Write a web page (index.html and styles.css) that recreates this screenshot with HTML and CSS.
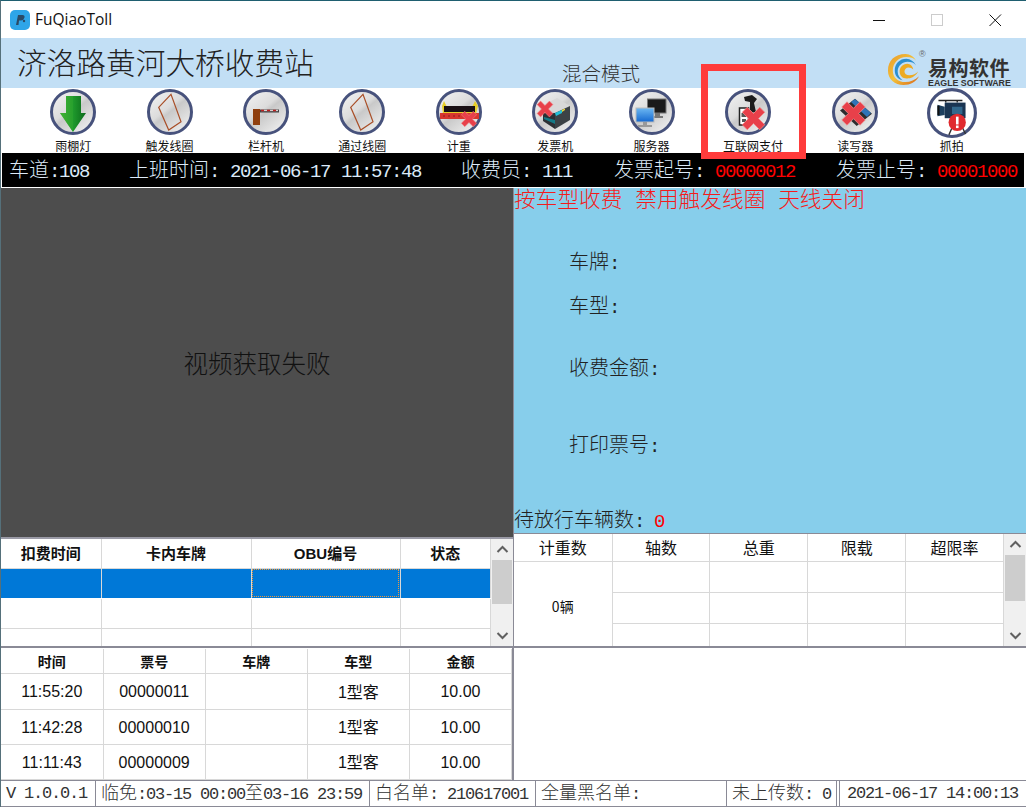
FILE: index.html
```html
<!DOCTYPE html>
<html lang="zh-CN">
<head>
<meta charset="utf-8">
<title>FuQiaoToll</title>
<link rel="stylesheet" href="styles.css">
</head>
<body>
<svg class="defs" width="0" height="0" aria-hidden="true">
  <defs>
    <linearGradient id="disc" x1="0.1" y1="0" x2="0.9" y2="1">
      <stop offset="0" stop-color="#f2f2f2"/>
      <stop offset="0.42" stop-color="#dcdcdc"/>
      <stop offset="0.5" stop-color="#c9c9c9"/>
      <stop offset="1" stop-color="#f4f4f4"/>
    </linearGradient>
    <linearGradient id="green" x1="0" y1="0" x2="1" y2="0">
      <stop offset="0" stop-color="#5cc23a"/>
      <stop offset="0.5" stop-color="#1f9a2c"/>
      <stop offset="1" stop-color="#0c6a1c"/>
    </linearGradient>
    <linearGradient id="screen" x1="0" y1="0" x2="0" y2="1">
      <stop offset="0" stop-color="#6db8f2"/>
      <stop offset="1" stop-color="#1468d0"/>
    </linearGradient>
    <linearGradient id="swirl" x1="0" y1="0" x2="1" y2="1">
      <stop offset="0" stop-color="#e89a2a"/>
      <stop offset="0.5" stop-color="#f3c13a"/>
      <stop offset="1" stop-color="#d8661a"/>
    </linearGradient>
    <g id="cross">
      <path d="M-9-5-5-9 0-4 5-9 9-5 4 0 9 5 5 9 0 4-5 9-9 5-4 0Z" fill="#e8404a" stroke="#f08a8a" stroke-width=".6"/>
    </g>
    <g id="base">
      <circle cx="24" cy="24" r="21.5" fill="url(#disc)" stroke="#47527c" stroke-width="3"/>
    </g>
  </defs>
</svg>

<div class="window">
  <header class="titlebar">
    <div class="app-title">
      <svg class="app-icon" viewBox="0 0 20 20"><rect width="20" height="20" rx="5" fill="#2ea5e8"/><path d="M6 15 8 5h4.500q2.500 0 2 2.600T11 10.500H9L8.500 15Z" fill="#2a4a66"/><circle cx="14" cy="11" r="1.200" fill="#2a4a66"/></svg>
      <span>FuQiaoToll</span>
    </div>
    <div class="win-controls">
      <svg class="win-btn" viewBox="0 0 46 24"><path d="M17 12.500H29" stroke="#111" fill="none"/></svg>
      <svg class="win-btn" viewBox="0 0 46 24"><rect x="17.500" y="6.500" width="11" height="11" stroke="#ccc" fill="none"/></svg>
      <svg class="win-btn" viewBox="0 0 46 24"><path d="M17.500 6.500 29 18M29 6.500 17.500 18" stroke="#111" fill="none"/></svg>
    </div>
  </header>

  <section class="banner">
    <h1 class="station">济洛路黄河大桥收费站</h1>
    <div class="mode">混合模式</div>
    <div class="logo">
      <svg class="logo-mark" viewBox="0 0 34 34">
        <path d="M19 1C8 1 1 8 1 18c0 9 7 15 16 15 7 0 13-3 16-9-4 4-9 6-14 6C11 30 6 25 6 18 6 10 12 4 20 4c4 0 8 1 10 4C28 4 24 1 19 1Z" fill="url(#swirl)"/>
        <path d="M20 6C13 6 8 11 8 18c0 5 3 9 8 10-3-2-5-5-5-9 0-6 5-10 10-10 4 0 7 1 9 4-2-4-6-7-10-7Z" fill="#2b8fd0"/>
        <path d="M21 11c-5 0-8 4-8 8 0 5 4 8 9 7 4 0 8-3 10-7-2 2-5 4-9 4-3 0-5-2-5-4s2-4 4-4c2 0 4 1 5 2 0-3-3-6-6-6Z" fill="#ecaa22"/>
      </svg>
      <span class="logo-reg">®</span>
      <div class="logo-text">
        <div class="logo-cn">易构软件</div>
        <div class="logo-en">EAGLE SOFTWARE</div>
      </div>
    </div>
  </section>

  <nav class="toolbar">
    <div class="tool">
      <svg class="tool-icon" viewBox="0 0 48 48"><use href="#base"/><path d="M17 8H32V25H37L24 44 11 25H17Z" fill="url(#green)"/><path d="M17 8H24V44L11 25H17Z" fill="#2ea52f" opacity=".6"/></svg>
      <span class="tool-label">雨棚灯</span>
    </div>
    <div class="tool">
      <svg class="tool-icon" viewBox="0 0 48 48"><use href="#base"/><path d="M12.700 19.300 25 6.300 35 33.700 22.700 42Z" fill="none" stroke="#a94f28" stroke-width="1.200"/></svg>
      <span class="tool-label">触发线圈</span>
    </div>
    <div class="tool">
      <svg class="tool-icon" viewBox="0 0 48 48"><use href="#base"/><rect x="11" y="21" width="7" height="16" fill="#8f3f0f"/><rect x="18" y="21.500" width="19" height="3" fill="#444"/><path d="M19 22.500H36" stroke="#d8d0d0" stroke-width="1.300"/><path d="M19 22.500H36" stroke="#c02020" stroke-width="1.300" stroke-dasharray="3 3"/></svg>
      <span class="tool-label">栏杆机</span>
    </div>
    <div class="tool">
      <svg class="tool-icon" viewBox="0 0 48 48"><use href="#base"/><path d="M12.700 19.300 25 6.300 35 33.700 22.700 42Z" fill="none" stroke="#a94f28" stroke-width="1.200"/></svg>
      <span class="tool-label">通过线圈</span>
    </div>
    <div class="tool">
      <svg class="tool-icon" viewBox="0 0 48 48"><use href="#base"/><path d="M7 18 9 13 12 19H37L40 13 43 18 41 26H8Z" fill="#e8cf28"/><rect x="9" y="18" width="31" height="6" fill="#1a1014"/><rect x="5" y="25" width="39" height="6" fill="#d8362e"/><path d="M8 28H26" stroke="#8c1c1c" stroke-dasharray="2 3"/><g transform="translate(34 31) scale(.85)"><use href="#cross"/></g></svg>
      <span class="tool-label">计重</span>
    </div>
    <div class="tool">
      <svg class="tool-icon" viewBox="0 0 48 48"><use href="#base"/><path d="M12 25 24 25V41L12 33Z" fill="#2c3034"/><path d="M14 16 26 10 39 18 24 25Z" fill="#d8d8d8"/><path d="M24 25 39 18V32L24 41Z" fill="#3c4246"/><path d="M13 29 24 32V36L13 31Z" fill="#157a86"/><path d="M24 25 31 22V25L25 28Z" fill="#22c0d8"/><path d="M31 22 34 20.500V22L31 24Z" fill="#e8d83a"/><g transform="translate(14 21) scale(.88)"><use href="#cross"/></g></svg>
      <span class="tool-label">发票机</span>
    </div>
    <div class="tool">
      <svg class="tool-icon" viewBox="0 0 48 48"><use href="#base"/><rect x="19.500" y="11" width="18.500" height="14" fill="#1a1a1a" stroke="#777"/><path d="M27 25H32V28H35V30H24V28H27Z" fill="#777"/><rect x="8" y="20" width="18" height="14" fill="url(#screen)" stroke="#bbb"/><path d="M15 34H19V37H24V39H10V37H15Z" fill="#999"/></svg>
      <span class="tool-label">服务器</span>
    </div>
    <div class="tool tool-pay">
      <svg class="tool-icon" viewBox="0 0 48 48"><use href="#base"/><path d="M20 9 28 7 33 11 30 15 32 24 26 25 26 14 21 13Z" fill="#1c1c1c"/><rect x="15.500" y="20" width="9" height="17" fill="#fff" stroke="#222" stroke-width="1.500"/><path d="M17.500 25h5v4h-5zM18 31h4v3h-4z" fill="#555"/><g transform="translate(29.500 30.500) scale(1.250)"><use href="#cross"/></g></svg>
      <span class="tool-label">互联网支付</span>
    </div>
    <div class="tool">
      <svg class="tool-icon" viewBox="0 0 48 48"><use href="#base"/><path d="M9 22.500 24 10.700 41 25.700 25.700 38Z" fill="#2c2c2e"/><path d="M20 14 24 11 40 25 36 29Z" fill="#2e74b8"/><g transform="translate(22.500 25.500) scale(1.300)"><use href="#cross"/></g></svg>
      <span class="tool-label">读写器</span>
    </div>
    <div class="tool">
      <svg class="tool-icon tool-icon-cam" viewBox="0 0 48 48"><circle cx="24" cy="24" r="22.500" fill="#fff" stroke="#47527c" stroke-width="3"/><path d="M11 12H34M18 12V14M29 12V14" stroke="#222" stroke-width="1.300" fill="none"/><path d="M10 16 17 18V26L10 27Z" fill="#1c3f5e"/><rect x="10" y="17" width="2" height="9" fill="#111"/><rect x="17" y="14" width="20" height="15" fill="#1a3552"/><rect x="24" y="18" width="10" height="7" fill="#32688c"/><path d="M25 36 21 45M33 36 37 44" stroke="#333" stroke-width="1.300"/><circle cx="29" cy="33" r="8.300" fill="#e02a2e"/><rect x="27.800" y="27.500" width="2.500" height="7.500" fill="#fff"/><rect x="27.800" y="36" width="2.500" height="2.500" fill="#fff"/></svg>
      <span class="tool-label">抓拍</span>
    </div>
  </nav>

  <section class="infobar">
    <div class="info info-lane"><span class="cn">车道</span>:108</div>
    <div class="info info-shift"><span class="cn">上班时间</span>: 2021-06-17 11:57:48</div>
    <div class="info info-op"><span class="cn">收费员</span>: 111</div>
    <div class="info info-from"><span class="cn">发票起号</span>: <span class="alert">00000012</span></div>
    <div class="info"><span class="cn">发票止号</span>: <span class="alert">00001000</span></div>
  </section>

  <main class="workspace">
    <div class="col col-left">
      <div class="video">视频获取失败</div>

      <div class="grid-box grid-box-deduct">
        <table class="grid grid-deduct">
          <colgroup><col class="c-d1"><col class="c-d2"><col class="c-d3"><col></colgroup>
          <thead><tr><th>扣费时间</th><th>卡内车牌</th><th class="latin-bold">OBU编号</th><th>状态</th></tr></thead>
          <tbody>
            <tr class="selected"><td></td><td></td><td class="focus"></td><td></td></tr>
            <tr><td></td><td></td><td></td><td></td></tr>
            <tr><td></td><td></td><td></td><td></td></tr>
          </tbody>
        </table>
        <div class="scrollbar">
          <svg class="sb-arrow" viewBox="0 0 21 21"><path d="M5.500 13 10.500 8 15.500 13" fill="none" stroke="#606060" stroke-width="2"/></svg>
          <div class="sb-track"><div class="sb-thumb sb-thumb-deduct"></div></div>
          <svg class="sb-arrow" viewBox="0 0 21 21"><path d="M5.500 8 10.500 13 15.500 8" fill="none" stroke="#606060" stroke-width="2"/></svg>
        </div>
      </div>

      <div class="grid-box grid-box-tickets">
        <table class="grid grid-tickets">
          <thead><tr><th>时间</th><th>票号</th><th>车牌</th><th>车型</th><th>金额</th></tr></thead>
          <tbody>
            <tr class="r1"><td>11:55:20</td><td>00000011</td><td></td><td class="kind">1型客</td><td>10.00</td></tr>
            <tr><td>11:42:28</td><td>00000010</td><td></td><td class="kind">1型客</td><td>10.00</td></tr>
            <tr><td>11:11:43</td><td>00000009</td><td></td><td class="kind">1型客</td><td>10.00</td></tr>
          </tbody>
        </table>
      </div>
    </div>

    <div class="col col-right">
      <div class="panel">
        <div class="notice">按车型收费 禁用触发线圈 天线关闭</div>
        <div class="field field-plate"><span class="cn">车牌</span>:</div>
        <div class="field field-type"><span class="cn">车型</span>:</div>
        <div class="field field-fee"><span class="cn">收费金额</span>:</div>
        <div class="field field-ticket"><span class="cn">打印票号</span>:</div>
        <div class="pending"><span class="cn">待放行车辆数</span>: <span class="alert">0</span></div>
      </div>

      <div class="grid-box grid-box-weigh">
        <table class="grid grid-weigh">
          <colgroup><col class="c-w1"><col><col><col><col></colgroup>
          <thead><tr><th>计重数</th><th>轴数</th><th>总重</th><th>限载</th><th>超限率</th></tr></thead>
          <tbody>
            <tr><td rowspan="3" class="merged">0辆</td><td></td><td></td><td></td><td></td></tr>
            <tr><td></td><td></td><td></td><td></td></tr>
            <tr><td></td><td></td><td></td><td></td></tr>
          </tbody>
        </table>
        <div class="scrollbar">
          <svg class="sb-arrow" viewBox="0 0 21 21"><path d="M5.500 13 10.500 8 15.500 13" fill="none" stroke="#606060" stroke-width="2"/></svg>
          <div class="sb-track"><div class="sb-thumb sb-thumb-weigh"></div></div>
          <svg class="sb-arrow" viewBox="0 0 21 21"><path d="M5.500 8 10.500 13 15.500 8" fill="none" stroke="#606060" stroke-width="2"/></svg>
        </div>
      </div>

      <div class="blank"></div>
    </div>
  </main>

  <footer class="statusbar">
    <div class="st st-1">V 1.0.0.1</div>
    <div class="st st-2"><span class="cn">临免</span>:03-15 00:00<span class="cn">至</span>03-16 23:59</div>
    <div class="st st-3"><span class="cn">白名单</span>: 210617001</div>
    <div class="st st-4"><span class="cn">全量黑名单</span>:</div>
    <div class="st st-5"><span class="cn">未上传数</span>: 0</div>
    <div class="st st-6">2021-06-17 14:00:13</div>
  </footer>

  <div class="highlight"></div>
</div>
</body>
</html>
```

FILE: styles.css
```css
* { box-sizing: border-box; }
html, body { margin: 0; padding: 0; background: #fff; }
.defs { position: absolute; }

.window {
  position: relative;
  width: 1026px;
  height: 807px;
  overflow: hidden;
  display: flex;
  flex-direction: column;
  border-top: 1px solid #1f5f70;
  border-left: 1px solid #55707a;
  font-family: "Noto Sans CJK SC", sans-serif;
  color: #000;
}

/* title bar */
.titlebar {
  height: 37px;
  flex: none;
  display: flex;
  justify-content: space-between;
  align-items: center;
  padding-left: 9px;
}
.app-title { display: flex; align-items: center; gap: 5px; font: 15.500px/20px "Open Sans", sans-serif; color: #111; }
.app-title span { margin-top: -2px; }
.app-icon { width: 20px; height: 20px; }
.win-controls { display: flex; gap: 12px; padding-right: 8px; }
.win-btn { width: 46px; height: 24px; }

/* banner */
.banner {
  height: 50px;
  flex: none;
  background: #c2dff5;
  display: flex;
  padding-left: 16px;
}
.station {
  margin: -1px 0 0;
  font-size: 29.700px;
  font-weight: 300;
  line-height: 50px;
  color: #222;
  width: 297px;
  white-space: nowrap;
}
.mode {
  margin: 22px 0 0 248px;
  font-size: 19.500px;
  font-weight: 300;
  line-height: 26px;
  height: 26px;
  color: #333;
  white-space: nowrap;
}
.logo { display: flex; margin-left: 247px; position: relative; padding-top: 15px; }
.logo-mark { width: 33px; height: 33px; }
.logo-reg { position: absolute; left: 32px; top: 11px; font: 9px "Liberation Sans", sans-serif; color: #666; }
.logo-text { margin-left: 8px; margin-top: 5px; }
.logo-cn { font-size: 20px; font-weight: 700; line-height: 20px; height: 20px; color: #333; letter-spacing: .5px; white-space: nowrap; }
.logo-en { font: 700 9.600px/10px "Liberation Sans", sans-serif; color: #333; white-space: nowrap; width: 82px; transform: scaleX(.92); transform-origin: left; }

/* toolbar */
.toolbar {
  height: 65px;
  flex: none;
  display: flex;
  padding-left: 24px;
  overflow: hidden;
}
.tool { width: 96.400px; flex: none; display: flex; flex-direction: column; align-items: center; }
.tool-pay { margin-right: 11px; }
.tool-pay .tool-label { margin-left: 10px; }
.tool-icon { width: 48px; height: 48px; flex: none; display: block; }
.tool-icon-cam { width: 50px; height: 50px; margin-bottom: -2px; }
.tool-label { font-size: 12px; line-height: 14px; margin-top: 3px; color: #111; white-space: nowrap; }

/* info bar */
.infobar {
  height: 34px;
  flex: none;
  margin: 0 2px 0 1px;
  background: #000;
  color: #dceaf8;
  display: flex;
  align-items: center;
  padding-left: 7px;
  font: 19px/34px "Liberation Mono", monospace;
  letter-spacing: -1.400px;
  word-spacing: 1px;
  white-space: pre;
}
.cn { font-family: "Noto Sans CJK SC", sans-serif; font-weight: 300; letter-spacing: 0; }
.infobar .cn { font-size: 20px; }
.info-lane { width: 120px; }
.info-shift { width: 332px; }
.info-op { width: 153px; }
.info-from { width: 222px; }
.alert { color: #f00; }

/* workspace */
.workspace {
  flex: 1;
  min-height: 0;
  margin-top: 1px;
  display: grid;
  grid-template-columns: 512px 1fr;
}
.col { display: flex; flex-direction: column; min-height: 0; min-width: 0; }
.col-right { border-left: 1px solid #8a8a96; }
.video {
  height: 349px;
  flex: none;
  background: #4d4d4d;
  color: #111;
  font-size: 24.500px;
  font-weight: 300;
  display: flex;
  align-items: center;
  justify-content: center;
}

/* panel */
.panel {
  height: 345px;
  flex: none;
  background: #87ceeb;
  color: #222;
  font: 19px/24px "Liberation Mono", monospace;
  letter-spacing: -1.400px;
}
.panel .cn { font-size: 20px; }
.notice {
  color: #f41c1c;
  font-family: "Noto Sans CJK SC", sans-serif;
  font-size: 21.700px;
  font-weight: 300;
  line-height: 20px;
  height: 22px;
  letter-spacing: 0;
  word-spacing: 8px;
  white-space: nowrap;
}
.field, .pending { white-space: pre; height: 24px; }
.field { padding-left: 55px; }
.field-plate { margin-top: 39px; }
.field-type { margin-top: 20px; }
.field-fee { margin-top: 38px; }
.field-ticket { margin-top: 53px; }
.pending { margin-top: 51px; }

/* grids */
.grid-box {
  display: flex;
  flex: none;
  background: #fff;
  overflow: hidden;
  border-bottom: 2px solid #8a8a96;
}
.grid-box-deduct { height: 111px; border-top: 2px solid #9a9aa6; }
.grid-box-tickets { height: 132px; border-bottom: 0; border-right: 1px solid #8a8a96; padding-top: 1px; }
.grid-box-weigh { height: 115px; border-top: 1px solid #8a8a96; }
.grid {
  table-layout: fixed;
  border-collapse: collapse;
  flex: 1;
  width: 100%;
  min-width: 0;
  height: 0;
  font-family: "Noto Sans CJK SC", sans-serif;
  color: #111;
}
.grid th, .grid td { border: 1px solid #d8d8d8; padding: 0; text-align: center; font-weight: 400; overflow: hidden; white-space: nowrap; }
.grid tr > :first-child { border-left: 0; }
.grid thead th { border-top: 0; }

.grid-deduct th { height: 29px; font-size: 15px; font-weight: 700; padding-bottom: 2px; }
.grid-deduct td { height: 30px; }
.latin-bold { font-family: "Liberation Sans", "Noto Sans CJK SC", sans-serif; }
.c-d1 { width: 100px; }
.c-d2 { width: 150px; }
.c-d3 { width: 149px; }
.selected td { background: #0078d7; border-color: #fff #d8d8d8 #fff #d8d8d8; }
.grid .focus { outline: 1px dotted #f09a3a; outline-offset: -2px; }

.grid-tickets th { height: 24px; font-size: 14px; font-weight: 700; }
.grid-tickets td { height: 35px; padding-top: 2px; font: 16px "Liberation Sans", "Noto Sans CJK SC", sans-serif; }
.grid-tickets td.kind { padding-top: 0; padding-bottom: 1px; }
.grid-tickets .r1 td { height: 36px; }

.grid-weigh th { height: 27px; font-size: 16px; }
.grid-weigh td { height: 31px; font-size: 14px; }
.grid-weigh .merged { padding-bottom: 4px; }
.c-w1 { width: 98px; }

.scrollbar { width: 22px; flex: none; background: #f0f0f0; display: flex; flex-direction: column; }
.sb-arrow { width: 21px; height: 21px; flex: none; margin: 0 auto; }
.sb-track { flex: 1; }
.sb-thumb { background: #cdcdcd; margin: 0 1px; }
.sb-thumb-deduct { height: 44px; }
.sb-thumb-weigh { height: 46px; }

.blank { flex: 1; background: #fff; }

/* status bar */
.statusbar {
  height: 27px;
  flex: none;
  display: flex;
  border-top: 1px solid #8a8a96;
  border-bottom: 1px solid #8a8a96;
  font: 17px/25px "Liberation Mono", monospace;
  letter-spacing: -1.200px;
  color: #333;
  white-space: pre;
  background: #fff;
}
.statusbar .cn { font-size: 18px; line-height: 20px; }
.st { border-right: 1px solid #8a8a96; padding-left: 5px; flex: none; height: 25px; }
.st-1 { width: 95px; }
.st-2 { width: 274px; }
.st-3 { width: 166px; }
.st-4 { width: 191px; }
.st-5 { width: 110px; margin-right: 2px; }
.st-6 { flex: 1; border-left: 1px solid #8a8a96; border-right: 0; padding-left: 7px; }

/* annotation over the page */
.highlight {
  position: absolute;
  left: 700px;
  top: 63px;
  width: 105px;
  height: 95px;
  border: 7px solid #ff3b3b;
  pointer-events: none;
}
```
